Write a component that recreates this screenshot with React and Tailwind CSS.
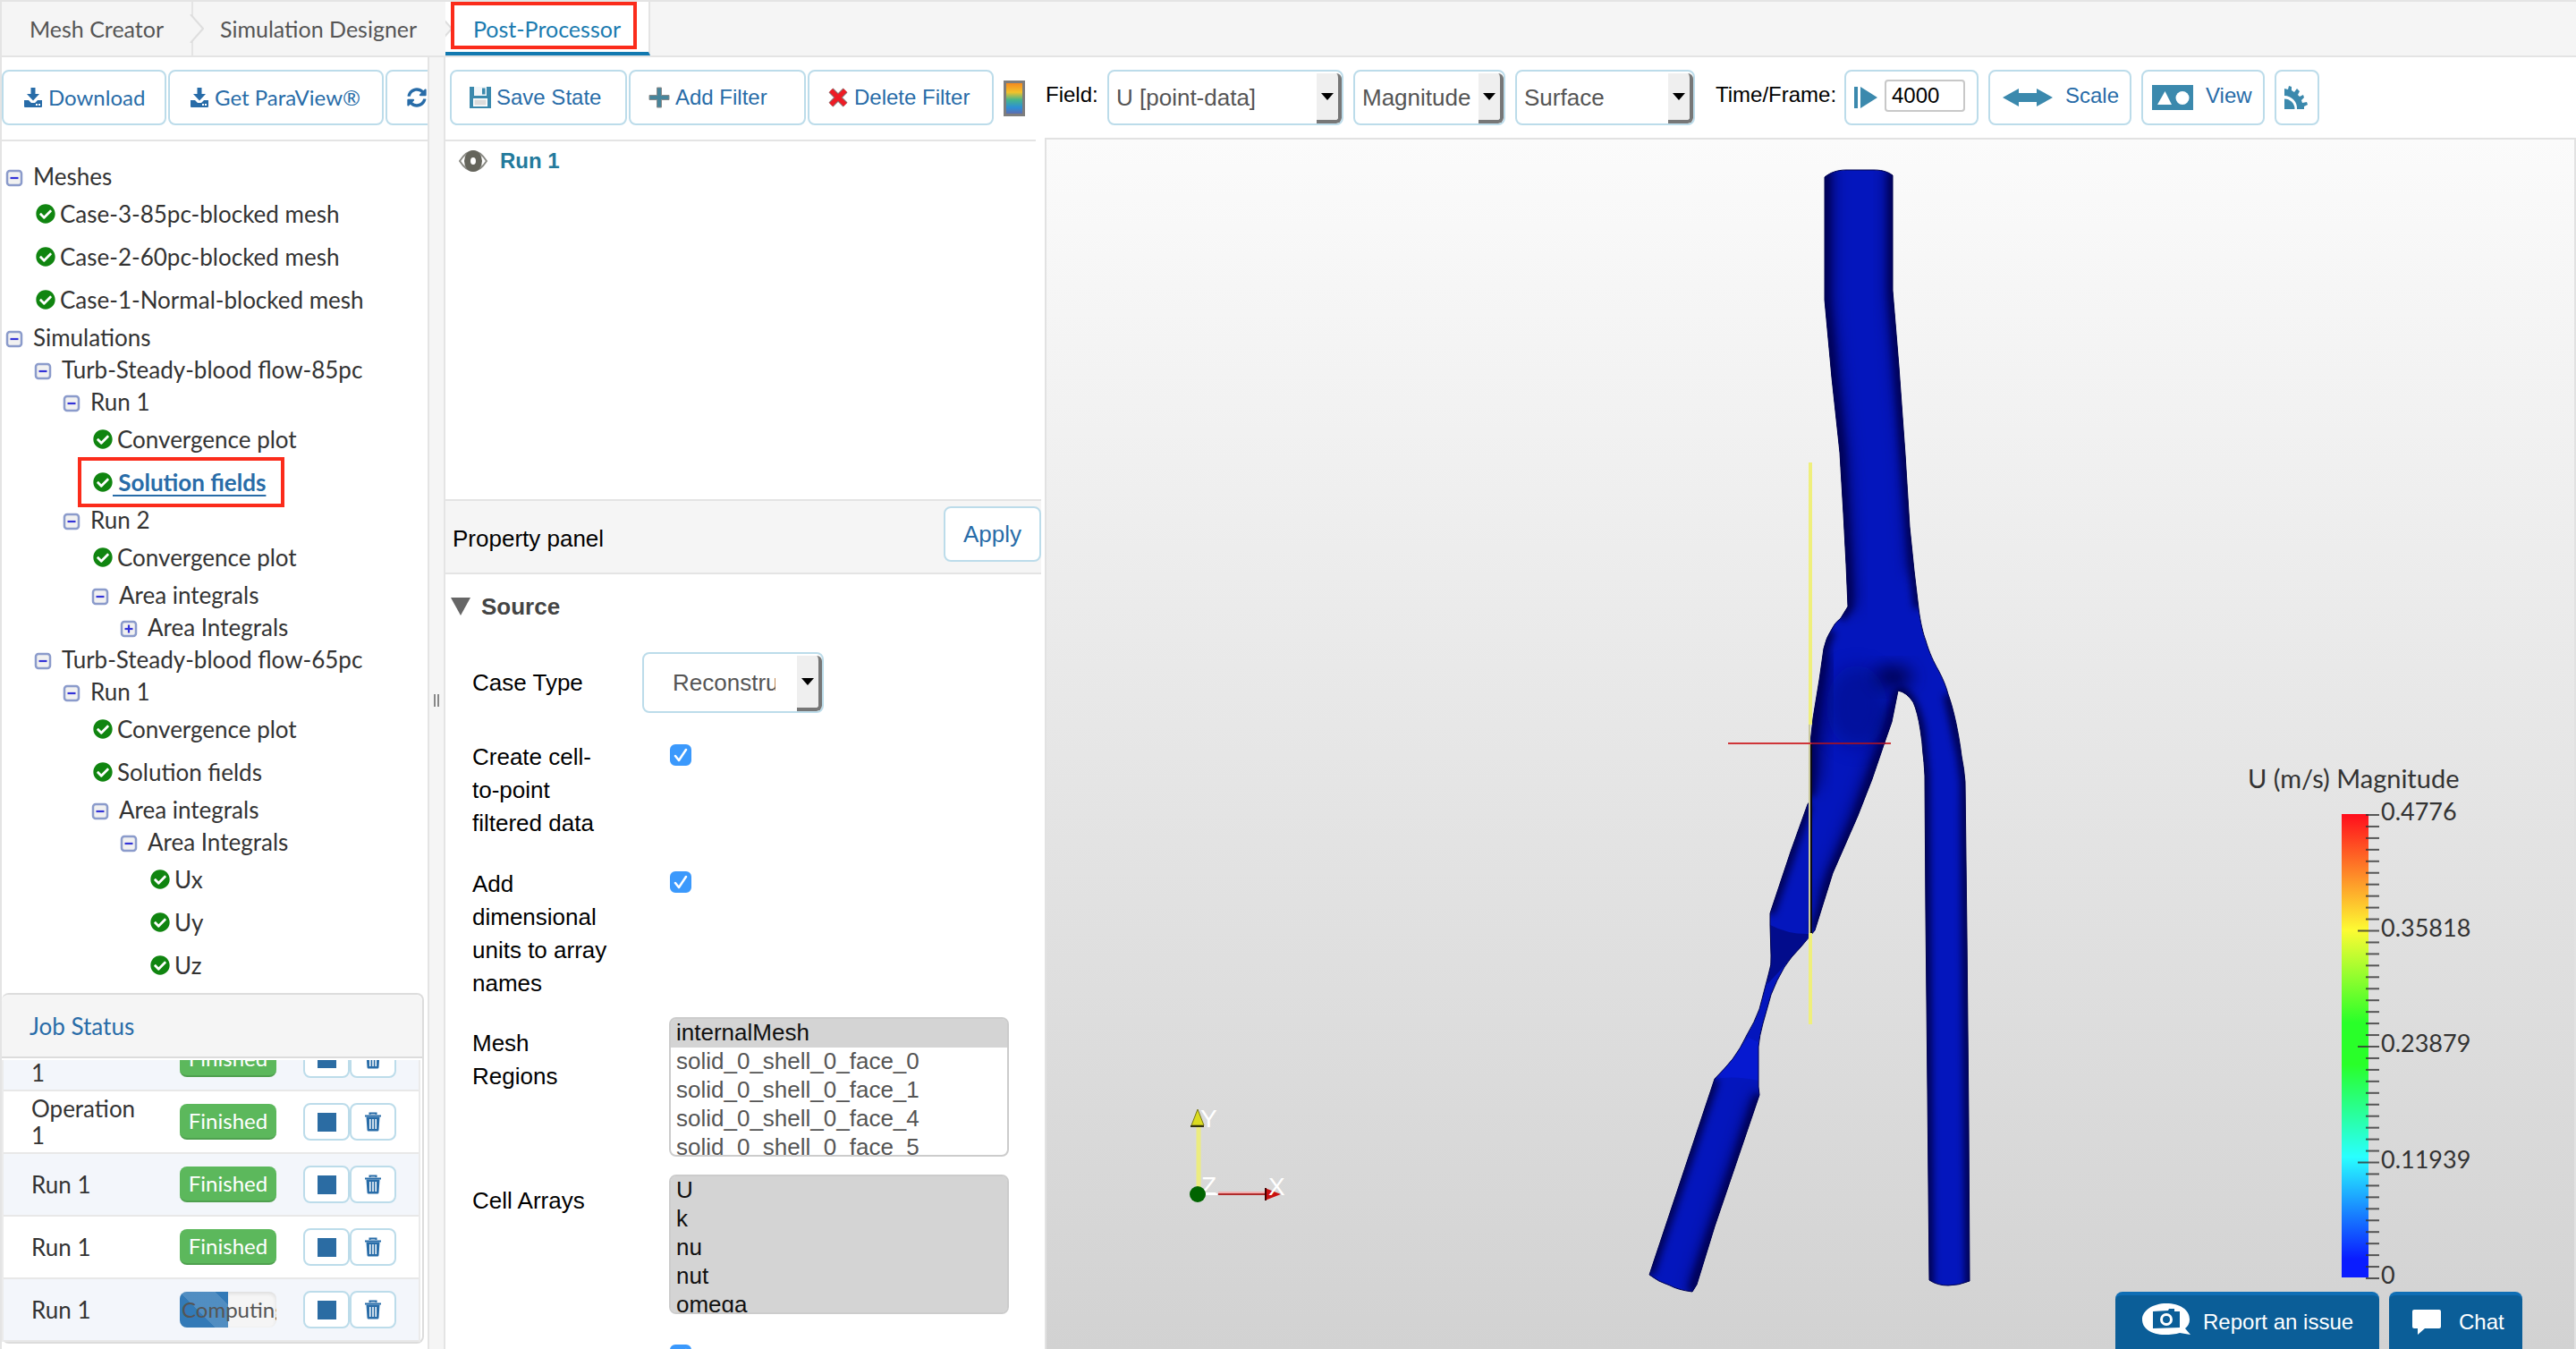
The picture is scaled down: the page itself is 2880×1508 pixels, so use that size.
import React, { useState } from 'react'
import { FaCheckCircle, FaSyncAlt } from 'react-icons/fa'

const tree = [
  { label: 'Meshes', level: 0 },
  { label: 'Case-3-85pc-blocked mesh', level: 1, leaf: true },
  { label: 'Case-2-60pc-blocked mesh', level: 1, leaf: true },
  { label: 'Case-1-Normal-blocked mesh', level: 1, leaf: true },
  { label: 'Simulations', level: 0 },
  { label: 'Turb-Steady-blood flow-85pc', level: 1 },
  { label: 'Run 1', level: 2 },
  { label: 'Convergence plot', level: 3, leaf: true },
  { label: 'Solution fields', level: 3, leaf: true, active: true },
  { label: 'Run 2', level: 2 },
  { label: 'Convergence plot', level: 3, leaf: true },
  { label: 'Area integrals', level: 3 },
  { label: 'Area Integrals', level: 4, closed: true },
  { label: 'Turb-Steady-blood flow-65pc', level: 1 },
  { label: 'Run 1', level: 2 },
  { label: 'Convergence plot', level: 3, leaf: true },
  { label: 'Solution fields', level: 3, leaf: true },
  { label: 'Area integrals', level: 3 },
  { label: 'Area Integrals', level: 4 },
  { label: 'Ux', level: 5, leaf: true },
  { label: 'Uy', level: 5, leaf: true },
  { label: 'Uz', level: 5, leaf: true },
]

const indent = ['pl-1', 'pl-9', 'pl-[68px]', 'pl-[100px]', 'pl-[132px]', 'pl-[164px]']

const jobs = [
  { name: 'Operation 1', done: true },
  { name: 'Operation 1', done: true },
  { name: 'Run 1', done: true },
  { name: 'Run 1', done: true },
  { name: 'Run 1', done: false },
]

const regions = ['internalMesh', 'solid_0_shell_0_face_0', 'solid_0_shell_0_face_1', 'solid_0_shell_0_face_4', 'solid_0_shell_0_face_5']
const arrays = ['U', 'k', 'nu', 'nut', 'omega']

const btn = 'flex items-center border-2 border-[#bcdcea] rounded-lg bg-white h-[62px] text-[#286ca8] shrink-0'

function DownloadIcon(){
  return (
    <svg className="w-[22px] h-[22px] mr-1.5" viewBox="0 0 22 22" fill="#286ca8">
      <path d="M8.5 0h5v7h4.5L11 14.500 4 7h4.500z" />
      <path d="M1 14h5l3 3h4l3-3h5v7a1 1 0 0 1-1 1H2a1 1 0 0 1-1-1z" />
      <path d="M14 18h2v2h-2zM17 18h2v2h-2z" fill="#fff" />
    </svg>
  )
}

function TrashIcon(){
  return (
    <svg className="w-5 h-[22px]" viewBox="0 0 20 22">
      <path d="M6.500 3V1.500h7V3" fill="none" stroke="#286ca8" strokeWidth="2" />
      <path d="M1 4.500h18" stroke="#286ca8" strokeWidth="2" />
      <path d="M2.500 5.500h15L16.500 20a1.500 1.500 0 0 1-1.500 1.500H5A1.500 1.500 0 0 1 3.500 20z" fill="#286ca8" />
      <path d="M6.800 8v11M10 8v11M13.200 8v11" stroke="#fff" strokeWidth="1.500" />
    </svg>
  )
}

function Toggle({ closed }){
  return (
    <svg className="w-5 h-5 mt-1 mr-[11px] shrink-0" viewBox="0 0 20 20">
      <rect x="2" y="2" width="16" height="16" rx="3" fill="#f1f1f1" stroke="#8b9bcb" strokeWidth="2.500" />
      <path d="M5.500 10h9" stroke="#3434d8" strokeWidth="2.200" />
      {closed && <path d="M10 5.500v9" stroke="#3434d8" strokeWidth="2.200" />}
    </svg>
  )
}

function TreeRow({ item }){
  if(!item.leaf) return (
    <li className={`flex items-center h-9 ${indent[item.level]}`}>
      <Toggle closed={item.closed} />
      <span>{item.label}</span>
    </li>
  )
  if(item.active) return (
    <li className={`relative flex items-center h-12 ${indent[item.level]}`}>
      <div className="absolute left-[85px] -top-1 w-[231px] h-14 border-4 border-[#fb2c1b]" />
      <FaCheckCircle className="size-[22px] ml-0.5 text-[#108510]" />
      <a href="#solution" className="font-bold text-[#286ca8] underline underline-offset-4 decoration-2 whitespace-pre"> Solution fields</a>
    </li>
  )
  return (
    <li className={`flex items-center h-12 ${indent[item.level]}`}>
      <FaCheckCircle className="size-[22px] ml-0.5 mr-[5px] text-[#108510] shrink-0" />
      <span>{item.label}</span>
    </li>
  )
}

function JobStatus(){
  return (
    <section className="mr-1 mb-1.5 border-2 border-[#dcdcdc] border-l-0 rounded-lg shrink-0">
      <h2 className="h-[71px] flex items-center pt-0.5 pl-[31px] bg-[#f5f5f5] border-b-2 border-[#dcdcdc] text-[#286ca8] rounded-t-lg">Job Status</h2>
      <div className="h-[315px] mt-0.5 mr-0.5 flex flex-col justify-end overflow-hidden border-x-2 border-[#ebebeb]">
        <table className="w-full table-fixed">
          <tbody>
            {jobs.map((job, i) => (
              <tr key={i} className="h-[70px] border-b-2 border-[#e8e8e8] odd:bg-[#f3f6fb]">
                <td className="w-[197px] pl-[31px] pr-10 leading-[30px]">{job.name}</td>
                <td className="w-[138px] text-2xl">
                  {job.done ? (
                    <div className="w-[108px] h-10 rounded-lg bg-[#5cb85c] border-b-2 border-[#4fa04f] text-white flex items-center justify-center">Finished</div>
                  ) : (
                    <div className="relative w-[108px] h-10 rounded-lg bg-[#f5f5f5] overflow-hidden shadow-[inset_0_2px_4px_rgba(0,0,0,0.1)]">
                      <div className="absolute inset-y-0 left-0 w-1/2 bg-[#337ab7] bg-[linear-gradient(45deg,rgba(255,255,255,.15)_25%,transparent_25%,transparent_50%,rgba(255,255,255,.15)_50%,rgba(255,255,255,.15)_75%,transparent_75%)] bg-[length:80px_80px]" />
                      <span className="relative block pl-0.5 leading-10 text-[#555] whitespace-nowrap">Computing</span>
                    </div>
                  )}
                </td>
                <td>
                  <div className="flex">
                    <button aria-label="Stop" className="w-[52px] h-[42px] border-2 border-[#bcdcea] rounded-lg bg-white flex items-center justify-center">
                      <span className="size-[21px] bg-[#2b6ca3]" />
                    </button>
                    <button aria-label="Delete" className="w-[52px] h-[42px] border-2 border-[#bcdcea] rounded-lg bg-white flex items-center justify-center">
                      <TrashIcon />
                    </button>
                  </div>
                </td>
              </tr>
            ))}
          </tbody>
        </table>
      </div>
    </section>
  )
}

function Dropdown({ id, label, options, box, select }){
  return (
    <div className={`relative shrink-0 overflow-hidden border-2 border-[#bcdcea] rounded-lg bg-white ${box}`}>
      <select id={id} aria-label={label} className={`appearance-none block w-full h-full text-[26px] text-[#555] outline-none overflow-hidden ${select}`}>
        {options.map(o => <option key={o}>{o}</option>)}
      </select>
      <div className="absolute top-0.5 right-0 bottom-0 w-7 pointer-events-none bg-[#efefef] border-r-4 border-b-4 border-[#777] flex items-center justify-center rounded-r-md">
        <svg className="w-3.5 h-2" viewBox="0 0 14 8"><path d="M0 0h14L7 8z" /></svg>
      </div>
    </div>
  )
}

function Toolbar(){
  const [frame, setFrame] = useState('4000')
  return (
    <div className="h-[90px] pt-3.5 pl-[5px] flex text-2xl shrink-0">
      <button className={`${btn} w-[198px] pl-5 mr-0.5`}>
        <svg className="w-6 h-6 mr-1.5" viewBox="0 0 24 24">
          <path d="M0 0h24v24H0z" fill="#3b89ad" />
          <path d="M5 0h14v10H5z" fill="#f1f6f9" />
          <path d="M14 1.500h3.500V8.500H14z" fill="#3b89ad" />
          <path d="M4 13h16v9H4z" fill="#fff" />
          <path d="M5.500 14.500h13v6h-13z" fill="#dcdcdc" />
        </svg>
        Save State
      </button>
      <button className={`${btn} w-[198px] pl-5 mr-0.5`}>
        <svg className="w-6 h-6 mr-1.5" viewBox="0 0 24 24"><path d="M9.500 1h5v8.500H23v5h-8.500V23h-5v-8.500H1v-5h8.500z" fill="#47859b" stroke="#8a8a8a" /></svg>
        Add Filter
      </button>
      <button className={`${btn} w-[208px] pl-5`}>
        <svg className="w-6 h-6 mr-1.5" viewBox="0 0 24 24">
          <path d="M4 4L20 20M20 4L4 20" stroke="#8a7070" strokeWidth="7" />
          <path d="M4 4L20 20M20 4L4 20" stroke="#ee1c25" strokeWidth="5" />
        </svg>
        Delete Filter
      </button>
      <button aria-label="Color map" className="w-6 h-10 mt-3 ml-[11px] mr-[23px] shrink-0 border-3 border-[#7d7d7d] bg-[linear-gradient(#f58a1f,#f3c22b_30%,#45b58c_55%,#2d8fd6_80%,#5c6db0)]" />
      <label htmlFor="field" className="w-[69px] leading-[56px] text-black">Field:</label>
      <div className="flex gap-[11px]">
        <Dropdown id="field" label="Field" options={['U [point-data]', 'p [point-data]']} box="w-[264px] h-[62px]" select="pl-2 pr-8" />
        <Dropdown id="component" label="Component" options={['Magnitude', 'X', 'Y', 'Z']} box="w-[170px] h-[62px]" select="pl-2 pr-8" />
        <Dropdown id="style" label="Representation" options={['Surface', 'Wireframe']} box="w-[201px] h-[62px]" select="pl-2 pr-8" />
      </div>
      <label htmlFor="frame" className="ml-[23px] w-36 leading-[56px] text-black">Time/Frame:</label>
      <div className="flex gap-[11px]">
        <div className={`${btn} w-[150px] pl-[9px]`}>
          <svg className="w-[26px] h-6 mr-2" viewBox="0 0 26 24" fill="#3b89ad"><path d="M0 0h4v24H0zM7 0l19 12L7 24z" /></svg>
          <input id="frame" value={frame} onChange={e => setFrame(e.target.value)} className="w-[90px] h-9 mb-1 border-2 border-[#c8c8c8] rounded text-black pl-1.5 outline-none" />
        </div>
        <button className={`${btn} w-[160px] pl-3.5 text-[#1a7bb0]`}>
          <svg className="w-14 h-5 mr-3.5" viewBox="0 0 56 20" fill="#3b89ad"><path d="M0 10L18 0v5h20V0l18 10-18 10v-5H18v5z" /></svg>
          <span className="mb-1">Scale</span>
        </button>
        <button className={`${btn} w-[138px] pl-2.5 text-[#1a7bb0]`}>
          <svg className="w-[46px] h-7 mr-3.5" viewBox="0 0 46 28"><path d="M0 0h46v28H0z" fill="#3b89ad" /><path d="M6 22L14.500 7 22 22z" fill="#fff" /><circle cx="34" cy="14.500" r="7.500" fill="#fff" /></svg>
          <span className="mb-1">View</span>
        </button>
        <button aria-label="Settings" className={`${btn} w-[50px] pl-[9px]`}>
          <svg className="w-[26px] h-[26px]" viewBox="0 0 26 26" fill="#3b89ad">
            <path d="M0 3L4 4L5 0L8 1L8 5L11 7L14 3L17 6L15 10L17 12L21 10L22 13L19 16L20 19L25 18L26 21L22 23V26H14A14 14 0 0 0 0 11Z" />
            <path d="M0 14.500A11.500 11.500 0 0 1 11.500 26H0z" />
          </svg>
        </button>
      </div>
    </div>
  )
}

function Check({ id, className }){
  const [on, setOn] = useState(true)
  return (
    <span className={`relative size-6 shrink-0 ${className}`}>
      <input id={id} type="checkbox" aria-label={id} checked={on} onChange={() => setOn(!on)} className="appearance-none block size-6 rounded-md border-2 border-gray-300 checked:bg-[#3b99fc] checked:border-[#3b99fc]" />
      {on && <svg className="absolute inset-0 size-6 pointer-events-none" viewBox="0 0 24 24"><path d="M6 13l4 5 8-12" fill="none" stroke="#fff" strokeWidth="2.500" strokeLinecap="round" strokeLinejoin="round" /></svg>}
    </span>
  )
}

const listbox = 'w-[380px] h-[156px] shrink-0 border-2 border-[#ccc] rounded-lg overflow-hidden [scrollbar-width:none] p-0 text-[#555] bg-white outline-none'
const option = 'h-8 min-h-8 leading-8 px-1.5 py-0 checked:bg-[linear-gradient(#d4d4d4,#d4d4d4)]'

function PropertyPanel(){
  return (
    <div className="text-[26px] text-black flex-1 min-h-0 overflow-hidden">
      <div className="h-[84px] bg-[#f5f5f5] border-y-2 border-[#e4e4e4] flex items-start justify-between pl-2 mr-1">
        <h2 className="leading-[84px]">Property panel</h2>
        <button className={`${btn} mt-1.5 w-[109px] justify-center`}>Apply</button>
      </div>
      <h3 className="h-[72px] pl-1.5 flex items-center font-bold text-[#444]">
        <svg className="w-[22px] h-5 mr-3" viewBox="0 0 22 20"><path d="M0 0h22L11 20z" fill="#666" /></svg>
        Source
      </h3>
      <div className="pl-[30px] leading-[37px]">
        <div className="flex items-center pt-[15px] pb-[31px]">
          <label htmlFor="case" className="w-[190px]">Case Type</label>
          <Dropdown id="case" label="Case Type" options={['Reconstructed Case', 'Decomposed Case']} box="w-[203px] h-[68px]" select="pl-8 pr-[52px] text-clip" />
        </div>
        <div className="flex pb-[31px]">
          <label htmlFor="filtered" className="w-[221px] pr-[70px]">Create cell-<br />to-point filtered data</label>
          <Check id="filtered" className="mt-1" />
        </div>
        <div className="flex pb-[19px]">
          <label htmlFor="units" className="w-[221px] pr-[70px]">Add dimensional units to array names</label>
          <Check id="units" className="mt-1" />
        </div>
        <div className="flex pb-5">
          <label htmlFor="regions" className="w-[220px] pr-[90px] pt-[11px]">Mesh Regions</label>
          <select id="regions" multiple defaultValue={['internalMesh']} className={listbox}>
            {regions.map(r => <option key={r} className={option}>{r}</option>)}
          </select>
        </div>
        <div className="flex pb-[34px]">
          <label htmlFor="arrays" className="w-[220px] pt-[11px]">Cell Arrays</label>
          <select id="arrays" multiple defaultValue={arrays} className={listbox}>
            {arrays.map(a => <option key={a} className={option}>{a}</option>)}
          </select>
        </div>
        <div className="flex pl-[221px]"><Check id="more" /></div>
      </div>
    </div>
  )
}

const vessel = 'M2040 198C2046 193 2054 190 2064 190H2095C2106 190 2112 193 2116 196V325L2123 410L2130 508L2135 589L2140 638L2145 680C2147 696 2150 708 2153 716C2157 730 2162 740 2167 749C2172 758 2176 768 2178 776C2184 792 2190 820 2193 845Q2196 860 2197 874L2199 1045L2201 1253L2202 1432Q2190 1437 2178 1437Q2166 1437 2157 1431L2155 1220L2153 1023L2152 867Q2151 850 2150 843Q2149 828 2147 816Q2144 796 2139 785Q2132 774 2122 772L2115 807L2108 827L2093 871L2077 912L2049 976L2029 1040L2013 1059Q2002 1070 1995 1081Q1986 1096 1980 1112L1971 1144Q1967 1158 1966 1170V1215L1967 1224L1917 1371L1897 1436L1892 1444Q1876 1442 1867 1437Q1854 1433 1844 1425L1917 1206Q1928 1195 1937 1184Q1946 1172 1953 1157Q1962 1142 1967 1128L1977 1090Q1981 1078 1980 1068L1979 1034V1021L2002 952L2021 899L2024 895V830L2027 803L2034 760L2039 725Q2042 712 2047 705Q2051 696 2058 691L2066 678L2064 631L2061 574L2057 506L2048 422L2040 335Z'
const sides = 'M2040 190V335L2048 422L2057 506L2064 631L2066 678L2058 691M2047 705L2039 725L2034 760L2024 830V890M2021 899L1979 1021M1917 1206L1844 1425M2116 190V325L2130 508L2140 638L2145 680M2178 776L2193 845L2197 874L2202 1440M2122 772Q2139 775 2147 816L2152 867L2157 1440M2122 772L2108 827L2077 912L2049 976L2029 1040M1967 1224L1917 1371L1892 1444'
const legend = ['0.4776', '0.35818', '0.23879', '0.11939', '0']

function Viewport(){
  return (
    <div className="relative flex-1 min-w-0 border-2 border-b-0 border-[#e2e2e2] bg-linear-to-b from-[#fbfbfb] to-[#d2d2d2]">
      <svg className="w-full h-full" viewBox="1170 156 1708 1350" preserveAspectRatio="xMidYMin meet">
        <defs>
          <clipPath id="body"><path d={vessel} /></clipPath>
          <filter id="soft" x="-20%" y="-20%" width="140%" height="140%"><feGaussianBlur stdDeviation="4" /></filter>
          <filter id="softer" x="-100%" y="-50%" width="300%" height="200%"><feGaussianBlur stdDeviation="10" /></filter>
          <linearGradient id="rainbow" x1="0" y1="0" x2="0" y2="1">
            <stop offset="0" stopColor="#ff0d1c" />
            <stop offset="0.250" stopColor="#fdfb33" />
            <stop offset="0.450" stopColor="#29ff29" />
            <stop offset="0.540" stopColor="#29ff29" />
            <stop offset="0.740" stopColor="#29ffff" />
            <stop offset="0.960" stopColor="#0a1cff" />
            <stop offset="1" stopColor="#0a1cff" />
          </linearGradient>
        </defs>

        {/* artery */}
        <path d={vessel} fill="#0416bd" />
        <g clipPath="url(#body)">
          <path d="M1979 1034Q2000 1045 2024 1044L2014 1058L1990 1085L1976 1100Z" fill="#020c8c" />
          <path d="M1917 1206Q1940 1202 1966 1208V1165L1955 1160Z" fill="#0619d0" />
          <path d={sides} fill="none" stroke="#000248" strokeWidth="10" filter="url(#soft)" />
          <path d="M2036 180V335L2053 506L2062 680" fill="none" stroke="#000358" strokeWidth="22" filter="url(#softer)" />
          <path d="M2118 180V325L2134 508L2142 640" fill="none" stroke="#000358" strokeWidth="12" filter="url(#softer)" />
          <path d="M2036 730L2022 880" fill="none" stroke="#000358" strokeWidth="18" filter="url(#softer)" />
          <path d="M2120 790L2090 880L2040 1010" fill="none" stroke="#000358" strokeWidth="14" filter="url(#softer)" />
          <path d="M1970 1224L1896 1444" fill="none" stroke="#000358" strokeWidth="14" filter="url(#softer)" />
          <ellipse cx="2116" cy="757" rx="22" ry="12" fill="#00004a" filter="url(#softer)" />
          <ellipse cx="2076" cy="790" rx="34" ry="46" fill="#020a80" opacity="0.500" filter="url(#softer)" />
        </g>
        <path d={vessel} fill="none" stroke="#00024f" strokeWidth="1" />

        {/* rotation center */}
        <path d="M2024 517V810M2024 1043V1145" stroke="#efef7c" strokeWidth="4" />
        <path d="M2023 810V1043" stroke="#c9c89a" strokeWidth="2" />
        <path d="M2025 830V1043" stroke="#0b0a12" strokeWidth="2" />
        <path d="M1932 831H2114" stroke="#cf3538" strokeWidth="2" />
        <path d="M2025 831H2108" stroke="#8c1238" strokeWidth="2" />

        {/* axes */}
        <g fontFamily="Liberation Sans" fontSize="28" fill="#fff">
          <path d="M1340 1258V1328" stroke="#ecec80" strokeWidth="5" />
          <path d="M1339 1240L1346 1258H1332Z" fill="#dcdc20" stroke="#77771a" />
          <path d="M1331 1259H1346" stroke="#333310" strokeWidth="2" />
          <path d="M1348 1335H1361" stroke="#fff" strokeWidth="2" />
          <path d="M1362 1333H1414" stroke="#f2b0b0" strokeWidth="2" />
          <path d="M1362 1335H1414" stroke="#b02a2a" strokeWidth="2" />
          <text x="1342" y="1260">Y</text>
          <text x="1343" y="1335">Z</text>
          <circle cx="1339" cy="1335" r="9" fill="#006400" />
          <path d="M1414 1328V1342L1432 1335Z" fill="#c81010" />
          <path d="M1415 1328V1342" stroke="#400" strokeWidth="2" />
          <text x="1418" y="1336">X</text>
        </g>

        {/* legend */}
        <g fontFamily="Lato" fontSize="27" fill="#333">
          <text x="2513" y="881" fontSize="29">U (m/s) Magnitude</text>
          <rect x="2618" y="910" width="30" height="518" fill="url(#rainbow)" />
          {Array.from({ length: 41 }, (_, i) => (
            <path key={i} d={`M${i % 10 === 0 && i % 40 !== 0 ? 2636 : 2645} ${911 + i * 12.95}H2660`} stroke="#333" strokeOpacity="0.800" strokeWidth="2" />
          ))}
          {legend.map((v, i) => <text key={v} x="2662" y={917 + i * 129.5}>{v}</text>)}
        </g>
      </svg>
    </div>
  )
}

export default function App(){
  return (
    <div className="relative h-screen flex flex-col bg-[#f5f5f5] border-l-2 border-t-2 border-[#e4e4e4] overflow-hidden font-['Lato',sans-serif] text-[26px] text-[#333]">
      <header className="h-[62px] shrink-0 flex border-b-2 border-[#e4e4e4] text-[25px] text-[#555]">
        <a href="#mesh" className="relative w-[214px] pt-0.5 border-r-2 border-[#e4e4e4] flex items-center justify-center">
          Mesh Creator
          <svg className="absolute -right-3.5 top-3.5 w-4 h-8 z-10" viewBox="0 0 16 32"><path d="M1 0L15 16L1 32" fill="#f5f5f5" stroke="#dedede" strokeWidth="2" /></svg>
        </a>
        <a href="#sim" className="w-[282px] pt-0.5 pl-[30px] flex items-center">Simulation Designer</a>
        <a href="#post" className="relative w-[229px] pt-1.5 bg-white border-b-4 border-r-2 border-b-[#1279b0] border-r-[#e4e4e4] text-[#1a7bb0] flex items-center pl-[31px]">
          <svg className="absolute left-0 top-3.5 w-2 h-8" viewBox="8 0 8 32"><path d="M1 0L15 16L1 32" fill="#f5f5f5" stroke="#dedede" strokeWidth="2" /></svg>
          Post-Processor
          <div className="absolute left-1.5 top-0 w-[208px] h-[53px] border-4 border-[#fb2c1b]" />
        </a>
      </header>

      <div className="flex flex-1 min-h-0">
        <aside className="w-[478px] shrink-0 bg-white border-r-2 border-[#e4e4e4] flex flex-col">
          <div className="h-[94px] shrink-0 flex items-start gap-0.5 pt-3.5 border-b-2 border-[#e4e4e4] overflow-hidden text-2xl">
            <button className={`${btn} w-[184px] pl-[22px]`}><DownloadIcon />Download</button>
            <button className={`${btn} w-[241px] pl-[22px]`}><DownloadIcon />Get ParaView®</button>
            <button aria-label="Refresh" className={`${btn} w-[70px] pl-[22px]`}><FaSyncAlt className="size-[22px]" /></button>
          </div>
          <ul className="pt-[21px] flex-1 min-h-0">
            {tree.map((item, i) => <TreeRow key={i} item={item} />)}
          </ul>
          <JobStatus />
        </aside>

        <div className="w-4 shrink-0 flex items-center justify-center gap-0.5 pb-1.5">
          <span className="w-0.5 h-3.5 bg-[#888]" />
          <span className="w-0.5 h-3.5 bg-[#888]" />
        </div>

        <main className="flex-1 min-w-0 flex flex-col bg-white border-l-2 border-[#e4e4e4] font-['Liberation_Sans',sans-serif]">
          <Toolbar />
          <div className="flex flex-1 min-h-0">
            <div className="w-[670px] shrink-0 pt-0.5 flex flex-col">
              <div className="h-[402px] mr-2.5 shrink-0 border-t-2 border-[#e4e4e4] pt-1.5">
                <div className="flex items-center h-8 pl-[15px] text-2xl font-bold text-[#237a9c]">
                  <svg className="w-8 h-[26px] mr-3.5" viewBox="0 0 32 26">
                    <path d="M1 13Q8 2 16 2T31 13Q24 24 16 24T1 13Z" fill="#fff" stroke="#8a8a84" strokeWidth="2" />
                    <ellipse cx="16" cy="13" rx="10" ry="12" fill="#65655c" />
                    <ellipse cx="16" cy="13" rx="3" ry="4" fill="#fff" />
                  </svg>
                  Run 1
                </div>
              </div>
              <PropertyPanel />
            </div>
            <Viewport />
          </div>
        </main>
      </div>

      <div className="absolute right-[60px] bottom-0 flex gap-[11px] font-['Liberation_Sans',sans-serif] text-2xl text-white">
        <button className="w-[295px] h-16 bg-[#0b5e98] border-t-4 border-[#0f6eb5] rounded-t-lg flex items-center pl-[30px]">
          <svg className="w-[54px] h-9 mr-3.5 mb-1.5" viewBox="0 0 54 36">
            <path d="M27 0C42 0 53 7 53 18Q53 24 48 28L54 35L42 33Q35 35 25 35C10 35 0 28 0 18S12 0 27 0Z" fill="#fff" />
            <path d="M12 9l17-1 1-2h6v3h6v18l-30 1z" fill="#0b5e98" />
            <circle cx="27" cy="18" r="5.500" fill="#0b5e98" stroke="#fff" strokeWidth="3" />
          </svg>
          Report an issue
        </button>
        <button className="w-[149px] h-16 bg-[#0b5e98] border-t-4 border-[#0f6eb5] rounded-t-lg flex items-center pl-[26px]">
          <svg className="w-8 h-7 mr-5" viewBox="0 0 32 28"><path d="M2 0h28a2 2 0 0 1 2 2v17a2 2 0 0 1-2 2H14l-8 7v-7H2a2 2 0 0 1-2-2V2a2 2 0 0 1 2-2z" fill="#fff" /></svg>
          Chat
        </button>
      </div>
    </div>
  )
}
